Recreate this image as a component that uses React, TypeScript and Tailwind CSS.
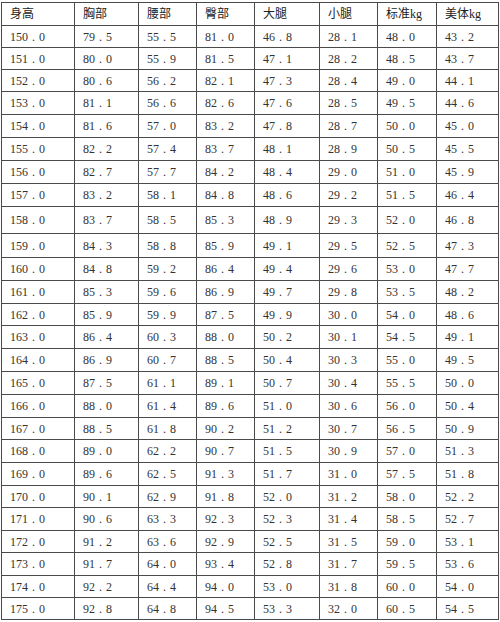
import React from 'react';

const headers = ['身高', '胸部', '腰部', '臀部', '大腿', '小腿', '标准kg', '美体kg'];

// column widths measured from the grid lines (include the right border)
const colW = ['w-[73px]', 'w-[64px]', 'w-[58px]', 'w-[58px]', 'w-[65px]', 'w-[58px]', 'w-[59px]', 'w-[62px]'];

const rows: string[][] = [
  ['150.0', '79.5', '55.5', '81.0', '46.8', '28.1', '48.0', '43.2'],
  ['151.0', '80.0', '55.9', '81.5', '47.1', '28.2', '48.5', '43.7'],
  ['152.0', '80.6', '56.2', '82.1', '47.3', '28.4', '49.0', '44.1'],
  ['153.0', '81.1', '56.6', '82.6', '47.6', '28.5', '49.5', '44.6'],
  ['154.0', '81.6', '57.0', '83.2', '47.8', '28.7', '50.0', '45.0'],
  ['155.0', '82.2', '57.4', '83.7', '48.1', '28.9', '50.5', '45.5'],
  ['156.0', '82.7', '57.7', '84.2', '48.4', '29.0', '51.0', '45.9'],
  ['157.0', '83.2', '58.1', '84.8', '48.6', '29.2', '51.5', '46.4'],
  ['158.0', '83.7', '58.5', '85.3', '48.9', '29.3', '52.0', '46.8'],
  ['159.0', '84.3', '58.8', '85.9', '49.1', '29.5', '52.5', '47.3'],
  ['160.0', '84.8', '59.2', '86.4', '49.4', '29.6', '53.0', '47.7'],
  ['161.0', '85.3', '59.6', '86.9', '49.7', '29.8', '53.5', '48.2'],
  ['162.0', '85.9', '59.9', '87.5', '49.9', '30.0', '54.0', '48.6'],
  ['163.0', '86.4', '60.3', '88.0', '50.2', '30.1', '54.5', '49.1'],
  ['164.0', '86.9', '60.7', '88.5', '50.4', '30.3', '55.0', '49.5'],
  ['165.0', '87.5', '61.1', '89.1', '50.7', '30.4', '55.5', '50.0'],
  ['166.0', '88.0', '61.4', '89.6', '51.0', '30.6', '56.0', '50.4'],
  ['167.0', '88.5', '61.8', '90.2', '51.2', '30.7', '56.5', '50.9'],
  ['168.0', '89.0', '62.2', '90.7', '51.5', '30.9', '57.0', '51.3'],
  ['169.0', '89.6', '62.5', '91.3', '51.7', '31.0', '57.5', '51.8'],
  ['170.0', '90.1', '62.9', '91.8', '52.0', '31.2', '58.0', '52.2'],
  ['171.0', '90.6', '63.3', '92.3', '52.3', '31.4', '58.5', '52.7'],
  ['172.0', '91.2', '63.6', '92.9', '52.5', '31.5', '59.0', '53.1'],
  ['173.0', '91.7', '64.0', '93.4', '52.8', '31.7', '59.5', '53.6'],
  ['174.0', '92.2', '64.4', '94.0', '53.0', '31.8', '60.0', '54.0'],
  ['175.0', '92.8', '64.8', '94.5', '53.3', '32.0', '60.5', '54.5'],
];

// row heights (header first), distance between horizontal lines
const rowH = [
  'h-[23px]',
  'h-[22px]', 'h-[22px]', 'h-[22px]', 'h-[23px]', 'h-[23px]', 'h-[23px]', 'h-[23px]', 'h-[23px]', 'h-[27px]',
  'h-[24px]', 'h-[23px]', 'h-[23px]', 'h-[22px]', 'h-[23px]', 'h-[23px]', 'h-[23px]', 'h-[23px]', 'h-[22px]',
  'h-[23px]', 'h-[23px]', 'h-[22px]', 'h-[23px]', 'h-[22px]', 'h-[23px]', 'h-[22px]', 'h-[22px]',
];

function Num({ value }: { value: string }) {
  const [a, b] = value.split('.');
  return (
    <span className="whitespace-nowrap">
      {a}
      <span className="inline-block w-[11px] text-center">.</span>
      {b}
    </span>
  );
}

export default function App() {
  return (
    <div
      className="w-[500px] h-[622px] bg-white overflow-hidden"
      style={{ fontFamily: '"Liberation Serif", "Noto Sans CJK SC", serif' }}
    >
      <div className="ml-[1px] mt-[2px] w-[498px] border-t border-l border-[#4a4a4a] text-[12px] leading-none">
        <div className={`flex border-b border-[#4a4a4a] ${rowH[0]}`}>
          {headers.map((h, i) => (
            <div
              key={h}
              className={`${colW[i]} shrink-0 border-r border-[#4a4a4a] pl-[8px] flex items-center text-[#222] pb-[1px]`}
            >
              {h}
            </div>
          ))}
        </div>
        {rows.map((r, ri) => (
          <div key={r[0]} className={`flex border-b border-[#4a4a4a] ${rowH[ri + 1]}`}>
            {r.map((v, i) => (
              <div
                key={i}
                className={`${colW[i]} shrink-0 border-r border-[#4a4a4a] pl-[8px] flex items-center text-[#333]`}
              >
                <Num value={v} />
              </div>
            ))}
          </div>
        ))}
      </div>
    </div>
  );
}
